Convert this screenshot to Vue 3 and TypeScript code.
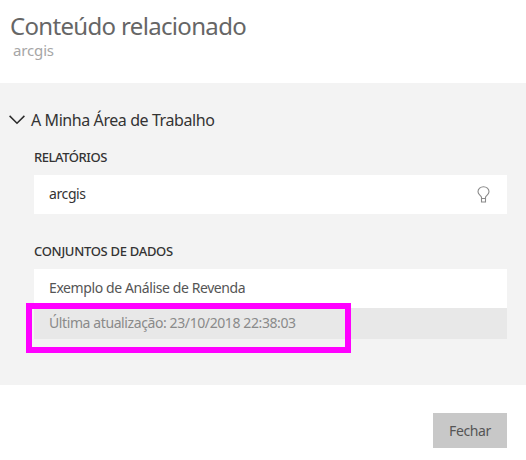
<script setup lang="ts">
interface Report {
  name: string
}
interface Dataset {
  name: string
  updated: string
}

const reports: Report[] = [{ name: 'arcgis' }]
const datasets: Dataset[] = [
  { name: 'Exemplo de Análise de Revenda', updated: 'Última atualização: 23/10/2018 22:38:03' },
]
</script>

<template>
  <div class="dialog">
    <header class="header">
      <h1 class="title"><span>Conteúdo relacionado</span></h1>
      <p class="subtitle"><span>arcgis</span></p>
    </header>
    <main class="content">
      <div class="workspace">
        <svg class="chevron" width="16" height="10" viewBox="0 0 16 10" aria-hidden="true">
          <path d="M0.6 0.9 L8 8.2 L15.4 0.9" />
        </svg>
        <span class="workspace-name">A Minha Área de Trabalho</span>
      </div>
      <section class="group">
        <h2 class="heading"><span class="heading-reports">RELATÓRIOS</span></h2>
        <div v-for="report in reports" :key="report.name" class="row">
          <span class="report-name">{{ report.name }}</span>
          <svg class="bulb" width="13" height="17" viewBox="0 0 13 17" aria-hidden="true">
            <path d="M4.5 12.5 V11.4 C4.5 9.6 1 8.8 1 5.8 A5.5 5.1 0 0 1 12 5.8 C12 8.8 8.5 9.6 8.5 11.4 V12.5 M4.5 12.5 H8.5 V16 H4.5 Z" />
          </svg>
        </div>
      </section>
      <section class="group datasets">
        <h2 class="heading"><span class="heading-datasets">CONJUNTOS DE DADOS</span></h2>
        <template v-for="dataset in datasets" :key="dataset.name">
          <div class="row">
            <span class="dataset-name">{{ dataset.name }}</span>
          </div>
          <div class="details">
            <span class="updated">{{ dataset.updated }}</span>
            <div class="highlight"></div>
          </div>
        </template>
      </section>
    </main>
    <footer class="footer">
      <button class="close" type="button"><span>Fechar</span></button>
    </footer>
  </div>
</template>

<style>
body {
  background: #fff;
}
</style>

<style scoped>
.dialog {
  width: 526px;
  height: 460px;
  box-sizing: border-box;
  display: flex;
  flex-direction: column;
  overflow: hidden;
  background: #fff;
  font-family: 'Segoe UI', 'Noto Sans', 'Open Sans', sans-serif;
  font-size: 14px;
  letter-spacing: -0.4px;
  color: #333;
  white-space: nowrap;
}
.header {
  height: 83px;
  box-sizing: border-box;
  padding: 10px 0 0 10px;
}
.title {
  margin: 0;
  font-size: 24px;
  line-height: 32px;
  font-weight: 400;
  letter-spacing: -0.67px;
  color: #666;
}
.subtitle {
  margin: 0;
  padding-left: 3px;
  font-size: 15px;
  line-height: 17px;
  letter-spacing: -0.15px;
  color: #a6a6a6;
}
.content {
  height: 302px;
  box-sizing: border-box;
  padding: 26px 19px 0 9px;
  background: #f3f3f3;
}
.workspace {
  height: 22px;
  display: flex;
  align-items: center;
  gap: 6px;
}
.chevron {
  fill: none;
  stroke: #2b2b2b;
  stroke-width: 1.5;
}
.workspace-name {
  font-size: 16px;
  line-height: 22px;
  letter-spacing: -0.42px;
}
.group {
  padding: 16px 0 0 25px;
}
.group.datasets {
  padding-top: 27px;
}
.heading {
  margin: 0;
  height: 20px;
  padding-bottom: 8px;
  font-size: 13px;
  line-height: 20px;
  font-weight: 500;
}
.heading-reports {
  letter-spacing: -0.45px;
}
.heading-datasets {
  letter-spacing: -0.3px;
}
.row {
  height: 39px;
  box-sizing: border-box;
  padding: 0 17px 0 15px;
  display: flex;
  align-items: center;
  justify-content: space-between;
  line-height: 19px;
  background: #fff;
}
.report-name,
.dataset-name {
  padding-bottom: 2px;
}
.dataset-name {
  color: #555;
}
.bulb {
  fill: none;
  stroke: #8a8a8a;
  stroke-width: 1.1;
}
.details {
  position: relative;
  height: 31px;
  padding-left: 15px;
  line-height: 30px;
  background: #e8e8e8;
  color: #8a8a8a;
}
.highlight {
  position: absolute;
  left: -8px;
  top: -5px;
  width: 325px;
  height: 50px;
  box-sizing: border-box;
  border: 6px solid #f0f;
}
.footer {
  display: flex;
  justify-content: flex-end;
  padding: 28px 19px 0 0;
}
.close {
  width: 74px;
  height: 35px;
  padding: 0 0 1px;
  border: 0;
  background: #c8c8c8;
  color: #555;
  font: inherit;
  letter-spacing: -0.4px;
}
</style>
